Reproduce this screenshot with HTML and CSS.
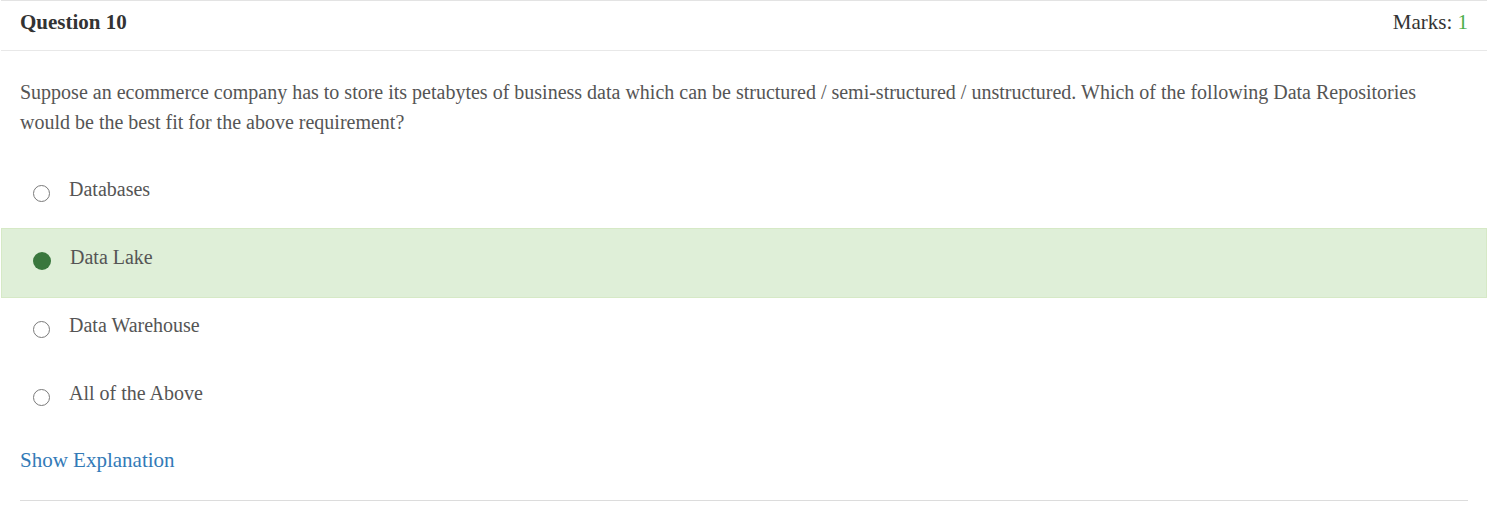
FILE: index.html
```html
<!DOCTYPE html>
<html>
<head>
<meta charset="utf-8">
<link rel="stylesheet" href="styles.css">
</head>
<body>
<div class="panel">
  <div class="panel-head">
    <span class="title">Question 10</span>
    <span class="marks">Marks: <span class="score">1</span></span>
  </div>
  <p class="question">Suppose an ecommerce company has to store its petabytes of business data which can be structured / semi-structured / unstructured. Which of the following Data Repositories would be the best fit for the above requirement?</p>
  <div class="options">
    <div class="option"><span class="radio"></span><span class="label">Databases</span></div>
    <div class="option selected"><span class="radio checked"></span><span class="label">Data Lake</span></div>
    <div class="option"><span class="radio"></span><span class="label">Data Warehouse</span></div>
    <div class="option"><span class="radio"></span><span class="label">All of the Above</span></div>
  </div>
  <a class="explain" href="#">Show Explanation</a>
  <div class="rule"></div>
</div>
</body>
</html>
```
FILE: styles.css
```css
html, body {
  margin: 0;
  padding: 0;
  background: #fff;
}
body {
  padding-left: 1px;
  font-family: "Liberation Serif", "Times New Roman", serif;
  color: #555;
}
.panel {
  border-top: 1px solid #e3e3e3;
}
.panel-head {
  display: flex;
  justify-content: space-between;
  align-items: center;
  box-sizing: border-box;
  height: 50px;
  padding: 0 19px 6px 19px;
  border-bottom: 1px solid #e8e8e8;
}
.title {
  font-weight: bold;
  font-size: 21px;
  color: #333;
}
.marks {
  font-size: 21px;
  color: #333;
}
.score {
  color: #4cae4c;
}
.question {
  margin: 26px 0 0 0;
  padding: 0 19px;
  font-size: 20px;
  line-height: 30px;
}
.options {
  margin-top: 23px;
  display: flex;
  flex-direction: column;
}
.option {
  display: flex;
  align-items: flex-start;
  height: 68px;
  box-sizing: border-box;
  border: 1px solid transparent;
  padding: 13px 0 0 31px;
  font-size: 20px;
  line-height: 30px;
}
.option.selected {
  background: #dfefd8;
  border-color: #d6e9c6;
  height: 70px;
  margin-bottom: -2px;
}
.radio {
  width: 17px;
  height: 17px;
  box-sizing: border-box;
  border: 1.5px solid #7a7a7a;
  border-radius: 50%;
  margin-top: 11px;
  margin-right: 19px;
  flex: none;
}
.radio.checked {
  width: 18px;
  height: 18px;
  background: #3a773d;
  border: none;
  margin-top: 10px;
  margin-right: 19px;
}
.explain {
  display: block;
  margin: 13px 0 0 19px;
  font-size: 21px;
  line-height: 30px;
  color: #337ab7;
  text-decoration: none;
  width: max-content;
}
.rule {
  margin: 25px 19px 0 19px;
  border-top: 1px solid #dcdcdc;
}
```
